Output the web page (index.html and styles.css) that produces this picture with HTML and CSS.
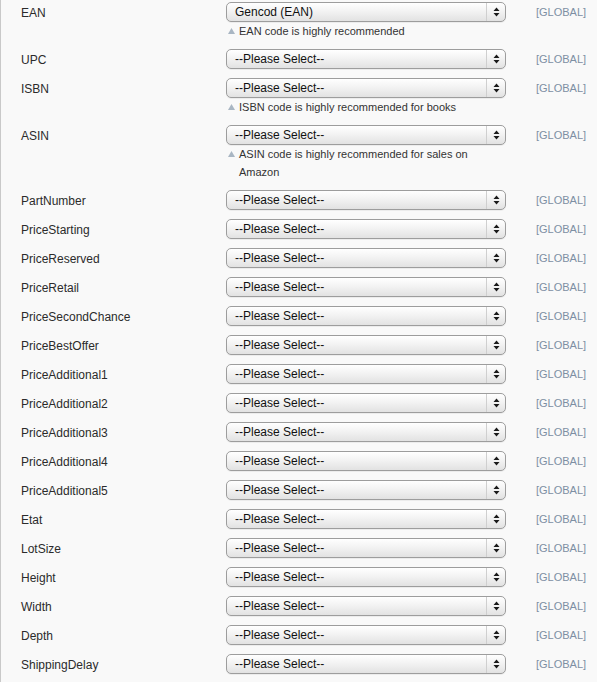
FILE: index.html
```html
<!DOCTYPE html>
<html>
<head>
<meta charset="utf-8">
<link rel="stylesheet" href="styles.css">
</head>
<body>
<div class="panel">
  <div class="row">
    <div class="label">EAN</div>
    <div class="field">
      <div class="select"><span class="value">Gencod (EAN)</span><span class="arrows"><svg width="7" height="10" viewBox="0 0 7 10"><path d="M3.5 0.5 L6.5 4 L0.5 4 Z M3.5 9.5 L6.5 6 L0.5 6 Z" fill="#1a1a1a"/></svg></span></div>
      <div class="note"><span class="tri"><svg width="7" height="6" viewBox="0 0 7 6"><path d="M3.5 0 L7 6 L0 6 Z" fill="#a9b6c3"/></svg></span><span class="note-text">EAN code is highly recommended</span></div>
    </div>
    <div class="scope">[GLOBAL]</div>
  </div>
  <div class="row">
    <div class="label">UPC</div>
    <div class="field">
      <div class="select"><span class="value">--Please Select--</span><span class="arrows"><svg width="7" height="10" viewBox="0 0 7 10"><path d="M3.5 0.5 L6.5 4 L0.5 4 Z M3.5 9.5 L6.5 6 L0.5 6 Z" fill="#1a1a1a"/></svg></span></div>
    </div>
    <div class="scope">[GLOBAL]</div>
  </div>
  <div class="row">
    <div class="label">ISBN</div>
    <div class="field">
      <div class="select"><span class="value">--Please Select--</span><span class="arrows"><svg width="7" height="10" viewBox="0 0 7 10"><path d="M3.5 0.5 L6.5 4 L0.5 4 Z M3.5 9.5 L6.5 6 L0.5 6 Z" fill="#1a1a1a"/></svg></span></div>
      <div class="note"><span class="tri"><svg width="7" height="6" viewBox="0 0 7 6"><path d="M3.5 0 L7 6 L0 6 Z" fill="#a9b6c3"/></svg></span><span class="note-text">ISBN code is highly recommended for books</span></div>
    </div>
    <div class="scope">[GLOBAL]</div>
  </div>
  <div class="row">
    <div class="label">ASIN</div>
    <div class="field">
      <div class="select"><span class="value">--Please Select--</span><span class="arrows"><svg width="7" height="10" viewBox="0 0 7 10"><path d="M3.5 0.5 L6.5 4 L0.5 4 Z M3.5 9.5 L6.5 6 L0.5 6 Z" fill="#1a1a1a"/></svg></span></div>
      <div class="note"><span class="tri"><svg width="7" height="6" viewBox="0 0 7 6"><path d="M3.5 0 L7 6 L0 6 Z" fill="#a9b6c3"/></svg></span><span class="note-text">ASIN code is highly recommended for sales on Amazon</span></div>
    </div>
    <div class="scope">[GLOBAL]</div>
  </div>
  <div class="row"><div class="label">PartNumber</div><div class="field"><div class="select"><span class="value">--Please Select--</span><span class="arrows"><svg width="7" height="10" viewBox="0 0 7 10"><path d="M3.5 0.5 L6.5 4 L0.5 4 Z M3.5 9.5 L6.5 6 L0.5 6 Z" fill="#1a1a1a"/></svg></span></div></div><div class="scope">[GLOBAL]</div></div>
  <div class="row"><div class="label">PriceStarting</div><div class="field"><div class="select"><span class="value">--Please Select--</span><span class="arrows"><svg width="7" height="10" viewBox="0 0 7 10"><path d="M3.5 0.5 L6.5 4 L0.5 4 Z M3.5 9.5 L6.5 6 L0.5 6 Z" fill="#1a1a1a"/></svg></span></div></div><div class="scope">[GLOBAL]</div></div>
  <div class="row"><div class="label">PriceReserved</div><div class="field"><div class="select"><span class="value">--Please Select--</span><span class="arrows"><svg width="7" height="10" viewBox="0 0 7 10"><path d="M3.5 0.5 L6.5 4 L0.5 4 Z M3.5 9.5 L6.5 6 L0.5 6 Z" fill="#1a1a1a"/></svg></span></div></div><div class="scope">[GLOBAL]</div></div>
  <div class="row"><div class="label">PriceRetail</div><div class="field"><div class="select"><span class="value">--Please Select--</span><span class="arrows"><svg width="7" height="10" viewBox="0 0 7 10"><path d="M3.5 0.5 L6.5 4 L0.5 4 Z M3.5 9.5 L6.5 6 L0.5 6 Z" fill="#1a1a1a"/></svg></span></div></div><div class="scope">[GLOBAL]</div></div>
  <div class="row"><div class="label">PriceSecondChance</div><div class="field"><div class="select"><span class="value">--Please Select--</span><span class="arrows"><svg width="7" height="10" viewBox="0 0 7 10"><path d="M3.5 0.5 L6.5 4 L0.5 4 Z M3.5 9.5 L6.5 6 L0.5 6 Z" fill="#1a1a1a"/></svg></span></div></div><div class="scope">[GLOBAL]</div></div>
  <div class="row"><div class="label">PriceBestOffer</div><div class="field"><div class="select"><span class="value">--Please Select--</span><span class="arrows"><svg width="7" height="10" viewBox="0 0 7 10"><path d="M3.5 0.5 L6.5 4 L0.5 4 Z M3.5 9.5 L6.5 6 L0.5 6 Z" fill="#1a1a1a"/></svg></span></div></div><div class="scope">[GLOBAL]</div></div>
  <div class="row"><div class="label">PriceAdditional1</div><div class="field"><div class="select"><span class="value">--Please Select--</span><span class="arrows"><svg width="7" height="10" viewBox="0 0 7 10"><path d="M3.5 0.5 L6.5 4 L0.5 4 Z M3.5 9.5 L6.5 6 L0.5 6 Z" fill="#1a1a1a"/></svg></span></div></div><div class="scope">[GLOBAL]</div></div>
  <div class="row"><div class="label">PriceAdditional2</div><div class="field"><div class="select"><span class="value">--Please Select--</span><span class="arrows"><svg width="7" height="10" viewBox="0 0 7 10"><path d="M3.5 0.5 L6.5 4 L0.5 4 Z M3.5 9.5 L6.5 6 L0.5 6 Z" fill="#1a1a1a"/></svg></span></div></div><div class="scope">[GLOBAL]</div></div>
  <div class="row"><div class="label">PriceAdditional3</div><div class="field"><div class="select"><span class="value">--Please Select--</span><span class="arrows"><svg width="7" height="10" viewBox="0 0 7 10"><path d="M3.5 0.5 L6.5 4 L0.5 4 Z M3.5 9.5 L6.5 6 L0.5 6 Z" fill="#1a1a1a"/></svg></span></div></div><div class="scope">[GLOBAL]</div></div>
  <div class="row"><div class="label">PriceAdditional4</div><div class="field"><div class="select"><span class="value">--Please Select--</span><span class="arrows"><svg width="7" height="10" viewBox="0 0 7 10"><path d="M3.5 0.5 L6.5 4 L0.5 4 Z M3.5 9.5 L6.5 6 L0.5 6 Z" fill="#1a1a1a"/></svg></span></div></div><div class="scope">[GLOBAL]</div></div>
  <div class="row"><div class="label">PriceAdditional5</div><div class="field"><div class="select"><span class="value">--Please Select--</span><span class="arrows"><svg width="7" height="10" viewBox="0 0 7 10"><path d="M3.5 0.5 L6.5 4 L0.5 4 Z M3.5 9.5 L6.5 6 L0.5 6 Z" fill="#1a1a1a"/></svg></span></div></div><div class="scope">[GLOBAL]</div></div>
  <div class="row"><div class="label">Etat</div><div class="field"><div class="select"><span class="value">--Please Select--</span><span class="arrows"><svg width="7" height="10" viewBox="0 0 7 10"><path d="M3.5 0.5 L6.5 4 L0.5 4 Z M3.5 9.5 L6.5 6 L0.5 6 Z" fill="#1a1a1a"/></svg></span></div></div><div class="scope">[GLOBAL]</div></div>
  <div class="row"><div class="label">LotSize</div><div class="field"><div class="select"><span class="value">--Please Select--</span><span class="arrows"><svg width="7" height="10" viewBox="0 0 7 10"><path d="M3.5 0.5 L6.5 4 L0.5 4 Z M3.5 9.5 L6.5 6 L0.5 6 Z" fill="#1a1a1a"/></svg></span></div></div><div class="scope">[GLOBAL]</div></div>
  <div class="row"><div class="label">Height</div><div class="field"><div class="select"><span class="value">--Please Select--</span><span class="arrows"><svg width="7" height="10" viewBox="0 0 7 10"><path d="M3.5 0.5 L6.5 4 L0.5 4 Z M3.5 9.5 L6.5 6 L0.5 6 Z" fill="#1a1a1a"/></svg></span></div></div><div class="scope">[GLOBAL]</div></div>
  <div class="row"><div class="label">Width</div><div class="field"><div class="select"><span class="value">--Please Select--</span><span class="arrows"><svg width="7" height="10" viewBox="0 0 7 10"><path d="M3.5 0.5 L6.5 4 L0.5 4 Z M3.5 9.5 L6.5 6 L0.5 6 Z" fill="#1a1a1a"/></svg></span></div></div><div class="scope">[GLOBAL]</div></div>
  <div class="row"><div class="label">Depth</div><div class="field"><div class="select"><span class="value">--Please Select--</span><span class="arrows"><svg width="7" height="10" viewBox="0 0 7 10"><path d="M3.5 0.5 L6.5 4 L0.5 4 Z M3.5 9.5 L6.5 6 L0.5 6 Z" fill="#1a1a1a"/></svg></span></div></div><div class="scope">[GLOBAL]</div></div>
  <div class="row"><div class="label">ShippingDelay</div><div class="field"><div class="select"><span class="value">--Please Select--</span><span class="arrows"><svg width="7" height="10" viewBox="0 0 7 10"><path d="M3.5 0.5 L6.5 4 L0.5 4 Z M3.5 9.5 L6.5 6 L0.5 6 Z" fill="#1a1a1a"/></svg></span></div></div><div class="scope">[GLOBAL]</div></div>
</div>
</body>
</html>
```
FILE: styles.css
```css
html, body {
  margin: 0;
  padding: 0;
  background: #f9f9f9;
}
body {
  font-family: "Liberation Sans", Arial, Helvetica, sans-serif;
  color: #333;
}
.panel {
  min-height: 682px;
  box-sizing: border-box;
  border-left: 1px solid #c9c9c9;
  padding-left: 20px;
}
.row {
  display: grid;
  grid-template-columns: 205px 280px auto;
  align-items: start;
  padding: 2px 0 7px;
}
.label {
  font-size: 12px;
  line-height: 20px;
  height: 20px;
  box-sizing: border-box;
  padding-top: 1px;
  color: #2b2b2b;
}
.field {
  display: flex;
  flex-direction: column;
}
.select {
  height: 20px;
  box-sizing: border-box;
  border: 1px solid #9d9d9d;
  border-radius: 5px;
  background: linear-gradient(#ffffff 0%, #f3f3f3 45%, #e2e2e2 100%);
  box-shadow: 0 1px 0 rgba(0,0,0,0.05);
  display: flex;
  align-items: center;
}
.value {
  flex: 1;
  padding-left: 8px;
  font-size: 12px;
  line-height: 18px;
  color: #111;
}
.arrows {
  width: 18px;
  height: 18px;
  border-left: 1px solid #cfcfcf;
  display: flex;
  align-items: center;
  justify-content: center;
}
.note {
  display: grid;
  grid-template-columns: 13px 1fr;
  font-size: 11px;
  line-height: 18px;
  color: #333;
}
.tri {
  display: flex;
  align-items: center;
  padding-left: 2px;
  height: 18px;
}
.scope {
  margin-left: 30px;
  font-size: 11px;
  line-height: 20px;
  height: 20px;
  color: #7d8fa3;
}
```
